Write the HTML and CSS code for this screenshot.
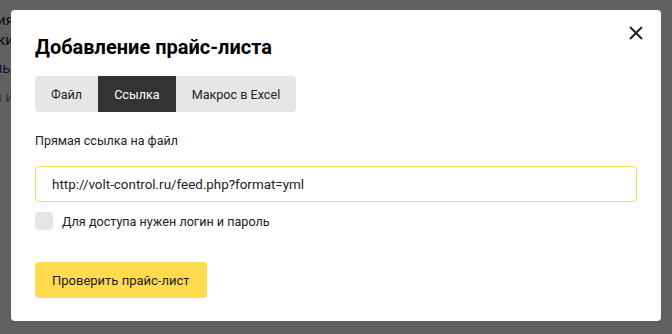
FILE: index.html
```html
<!DOCTYPE html>
<html lang="ru">
<head>
  <meta charset="UTF-8" />
  <meta name="viewport" content="width=device-width, initial-scale=1.0" />
  <title>Добавление прайс-листа</title>
  <link rel="stylesheet" href="styles.css">
</head>
<body>

  <!-- Page behind the overlay -->
  <div class="page">
    <div class="page-line"><span>Загрузка и обновления</span></div>
    <div class="page-line"><span>Настройки выгрузки ссылки</span></div>
    <div class="page-line link"><span>Справочные материалы</span></div>
    <div class="page-line muted"><span>Последние изменения и</span></div>
  </div>

  <div class="overlay">
    <div class="modal">
      <button class="close" aria-label="Закрыть">
        <svg width="14" height="14" viewBox="0 0 14 14">
          <path d="M1 1 L13 13 M13 1 L1 13" stroke="#222" stroke-width="2" fill="none" />
        </svg>
      </button>

      <h2 class="title">Добавление прайс-листа</h2>

      <div class="tabs">
        <button class="tab">Файл</button>
        <button class="tab active">Ссылка</button>
        <button class="tab">Макрос в Excel</button>
      </div>

      <label class="field-label" for="feedUrl">Прямая ссылка на файл</label>
      <input class="field" id="feedUrl" type="text" value="http://volt-control.ru/feed.php?format=yml">

      <label class="check">
        <span class="check-box"></span>
        <span>Для доступа нужен логин и пароль</span>
      </label>

      <button class="btn-primary">Проверить прайс-лист</button>
    </div>
  </div>

</body>
</html>
```

FILE: styles.css
```css
* {
  box-sizing: border-box;
}

body {
  margin: 0;
  font-family: Roboto, 'Liberation Sans', sans-serif;
  color: #222;
  background: #fff;
  width: 672px;
  height: 334px;
  overflow: hidden;
}

/* background page, only a sliver shows left of the modal */
.page {
  padding-top: 10px;
}

.page-line {
  display: flex;
  justify-content: flex-end;
  width: 14px;
  font-size: 15px;
  line-height: 20px;
  white-space: nowrap;
}

.page-line.link {
  margin-top: 8px;
  color: #4b2a8c;
}

.page-line.muted {
  margin-top: 9px;
  color: #888;
}

.overlay {
  position: absolute;
  inset: 0;
  background: rgba(0, 0, 0, 0.62);
  padding: 10px 0 0 11px;
}

.modal {
  position: relative;
  width: 650px;
  height: 311px;
  background: #fff;
  border-radius: 4px;
  padding: 24px 24px 23px 24px;
}

.close {
  position: absolute;
  top: 16px;
  right: 18px;
  width: 14px;
  height: 14px;
  padding: 0;
  border: none;
  background: none;
  cursor: pointer;
}

.title {
  margin: 0;
  font-size: 20px;
  line-height: 27px;
  font-weight: 700;
  color: #000;
}

.tabs {
  display: inline-flex;
  margin-top: 15px;
  background: #e6e6e6;
  border-radius: 4px;
  overflow: hidden;
}

.tab {
  height: 36px;
  padding: 0 16px;
  border: none;
  background: transparent;
  font-family: inherit;
  font-size: 12.6px;
  color: #222;
  cursor: pointer;
}

.tab.active {
  background: #333;
  color: #fff;
}

.field-label {
  display: block;
  margin-top: 20px;
  font-size: 12.5px;
  line-height: 18px;
  color: #222;
}

.field {
  display: block;
  width: 100%;
  height: 36px;
  margin-top: 16px;
  padding: 0 16px;
  border: 1px solid #ffdb4d;
  border-radius: 4px;
  font-family: inherit;
  font-size: 13.4px;
  color: #222;
  outline: none;
}

.check {
  display: flex;
  align-items: center;
  gap: 9px;
  margin-top: 10px;
  height: 18px;
  font-size: 12.6px;
  color: #222;
}

.check-box {
  width: 18px;
  height: 18px;
  border-radius: 4px;
  background: #e6e6e6;
}

.btn-primary {
  display: block;
  margin-top: 32px;
  height: 36px;
  padding: 0 17px;
  border: none;
  border-radius: 4px;
  background: #ffdb4d;
  font-family: inherit;
  font-size: 13px;
  color: #222;
  cursor: pointer;
}
```
